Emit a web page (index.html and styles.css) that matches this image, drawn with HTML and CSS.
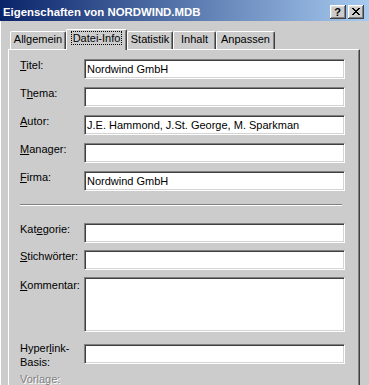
FILE: index.html
```html
<!DOCTYPE html>
<html lang="de">
<head>
<meta charset="utf-8">
<title>Eigenschaften von NORDWIND.MDB</title>
<link rel="stylesheet" href="styles.css">
</head>
<body>
<div class="window">
  <div class="titlebar">
    <span class="title">Eigenschaften von NORDWIND.MDB</span>
    <div class="caption-buttons">
      <span class="cbtn help">?</span>
      <span class="cbtn close">
        <svg width="8" height="7" viewBox="0 0 8 7" shape-rendering="crispEdges">
          <path d="M0 0h2v1H0z M6 0h2v1H6z M1 1h2v1H1z M5 1h2v1H5z M2 2h4v1H2z M3 3h2v1H3z M2 4h4v1H2z M1 5h2v1H1z M5 5h2v1H5z M0 6h2v1H0z M6 6h2v1H6z" fill="#000"/>
        </svg>
      </span>
    </div>
  </div>
  <div class="client">
    <div class="tabs">
      <div class="tab w-allgemein">Allgemein</div>
      <div class="tab active w-datei"><span class="focus">Datei-Info</span></div>
      <div class="tab w-statistik">Statistik</div>
      <div class="tab w-inhalt">Inhalt</div>
      <div class="tab w-anpassen">Anpassen</div>
    </div>
    <div class="panel">
      <div class="row"><span class="lbl"><u>T</u>itel:</span><div class="field">Nordwind GmbH</div></div>
      <div class="row"><span class="lbl">T<u>h</u>ema:</span><div class="field"></div></div>
      <div class="row"><span class="lbl"><u>A</u>utor:</span><div class="field">J.E. Hammond, J.St. George, M. Sparkman</div></div>
      <div class="row"><span class="lbl"><u>M</u>anager:</span><div class="field"></div></div>
      <div class="row"><span class="lbl"><u>F</u>irma:</span><div class="field">Nordwind GmbH</div></div>
      <div class="sep"></div>
      <div class="row tight"><span class="lbl">Kat<u>e</u>gorie:</span><div class="field"></div></div>
      <div class="row tight"><span class="lbl"><u>S</u>tichwörter:</span><div class="field"></div></div>
      <div class="row comment"><span class="lbl lbl-comment"><u>K</u>ommentar:</span><div class="field memo"></div></div>
      <div class="row hyper"><span class="lbl lbl-two">Hyper<u>l</u>ink-<br>Basis:</span><div class="field"></div></div>
      <div class="row last"><span class="lbl disabled">Vorlage:</span></div>
    </div>
  </div>
</div>
</body>
</html>
```

FILE: styles.css
```css
* { box-sizing: border-box; }

html, body {
  margin: 0;
  padding: 0;
}

body {
  width: 369px;
  height: 385px;
  overflow: hidden;
  background: #cccccc;
  font-family: "Liberation Sans", Arial, sans-serif;
  font-size: 11px;
  color: #000;
}

.window {
  width: 369px;
  height: 385px;
  overflow: hidden;
}

.titlebar {
  height: 21px;
  display: flex;
  align-items: flex-start;
  background: linear-gradient(to right, #0a246a 0%, #a6caf0 100%);
}

.title {
  padding: 5px 0 0 3px;
  color: #fff;
  font-weight: bold;
  font-size: 11.4px;
  line-height: 14px;
  white-space: nowrap;
}

.caption-buttons {
  margin-left: auto;
  margin-top: 5px;
  padding-right: 5px;
  display: flex;
  gap: 2px;
}

.cbtn {
  width: 16px;
  height: 14px;
  background: #cccccc;
  box-shadow: inset -1px -1px #404040, inset 1px 1px #ffffff, inset -2px -2px #808080, inset 2px 2px #dcdcdc;
  display: flex;
  align-items: center;
  justify-content: center;
}

.help {
  font-weight: bold;
  font-size: 11px;
  line-height: 12px;
  padding: 0 1px 1px 0;
}

.close svg {
  display: block;
  margin: 0 1px 1px 0;
}

.client {
  height: 364px;
  padding: 8px 0 0 8px;
  background: linear-gradient(to right, #ffffff 0 1px, #cccccc 1px);
}

.tabs {
  position: relative;
  z-index: 2;
  height: 20px;
  display: flex;
  align-items: flex-end;
  padding-left: 2px;
}

.tab {
  height: 18px;
  padding-top: 1px;
  line-height: 13px;
  text-align: center;
  background: #cccccc;
  border-top: 1px solid #fff;
  border-left: 1px solid #fff;
  border-right: 1px solid #404040;
  border-radius: 2px 2px 0 0;
  box-shadow: inset -1px 0 #808080;
  white-space: nowrap;
}

.tab.active {
  height: 21px;
  margin-bottom: -1px;
  padding-top: 1px;
}

.focus {
  display: inline-block;
  border: 1px dotted #000;
  padding: 0 1px;
  line-height: 12px;
}

.w-allgemein { width: 56px; }
.w-datei { width: 61px; }
.w-statistik { width: 46px; }
.w-inhalt { width: 43px; }
.w-anpassen { width: 59px; }

.panel {
  position: relative;
  z-index: 1;
  width: 352px;
  height: 336px;
  display: flex;
  flex-direction: column;
  padding: 9px 0 0 11px;
  border-top: 1px solid #fff;
  border-left: 1px solid #fff;
  border-right: 1px solid #404040;
  box-shadow: inset -1px 0 #808080;
}

.row {
  display: flex;
  align-items: flex-start;
  margin-bottom: 8px;
  flex: none;
}

.row.tight { margin-bottom: 7px; }
.row.comment { margin-bottom: 12px; }
.row.hyper { margin-bottom: 4px; }
.row.last { margin-bottom: 0; }

.lbl {
  width: 64px;
  flex: none;
  line-height: 13px;
  white-space: nowrap;
}

.lbl-comment { padding-top: 2px; }

.lbl-two {
  margin-top: -3px;
  line-height: 14px;
}

.disabled {
  color: #808080;
  text-shadow: 1px 1px 0 #fff;
}

.field {
  width: 261px;
  height: 20px;
  flex: none;
  background: #fff;
  border: 1px solid;
  border-color: #808080 #fff #fff #808080;
  box-shadow: inset 1px 1px #404040, inset -1px -1px #d4d4d4;
  padding: 1px 0 0 2px;
  line-height: 17px;
  white-space: nowrap;
  overflow: hidden;
}

.field.memo { height: 55px; }

.sep {
  width: 322px;
  height: 2px;
  margin: 5px 0 17px;
  border-top: 1px solid #808080;
  border-bottom: 1px solid #fff;
  flex: none;
}
```
